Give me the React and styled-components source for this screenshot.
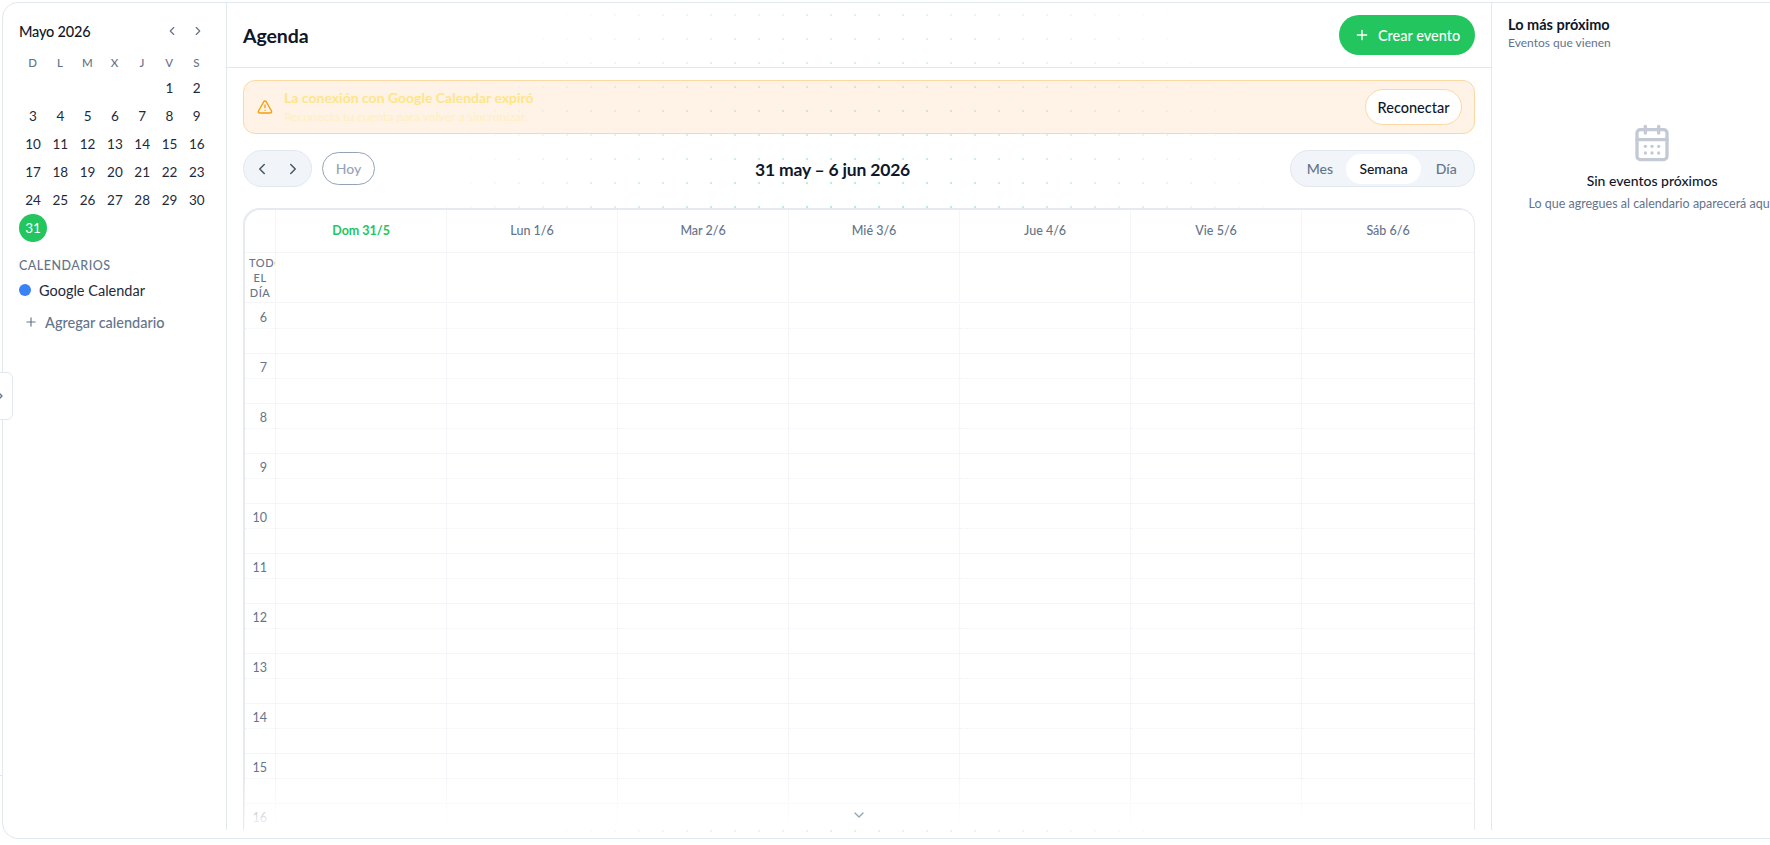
import React from "react";
import styled, { createGlobalStyle } from "styled-components";
import { ChevronLeft, ChevronRight, ChevronDown, Plus, TriangleAlert, CalendarDays } from "lucide-react";

const Global = createGlobalStyle`
  html, body { margin: 0; padding: 0; height: 100%; background: #fff; overflow: hidden; }
  body { font-family: "Lato", "Noto Sans", sans-serif; color: #0f172a; }
  * { box-sizing: border-box; }
  button { font-family: inherit; }
`;

const Page = styled.div`
  position: relative;
  width: 1770px;
  height: 845px;
  overflow: hidden;
  padding: 2px 0 0 2px;
`;

const Shell = styled.div`
  position: relative;
  width: 1840px;
  height: 837px;
  border: 1px solid #e2e8f0;
  border-radius: 16px;
  background: #fff;
  padding-bottom: 8px;
`;

const Dots = styled.div`
  position: absolute;
  inset: 0;
  border-radius: 16px;
  background-image: radial-gradient(circle at center, rgba(34, 197, 94, 0.38) 1px, transparent 1.4px);
  background-size: 24px 24px;
  -webkit-mask-image: radial-gradient(ellipse 470px 570px at 857px 417px, #000 25%, transparent 100%);
  mask-image: radial-gradient(ellipse 470px 570px at 857px 417px, #000 25%, transparent 100%);
`;

const Columns = styled.div`
  position: relative;
  display: flex;
  height: 100%;
`;

const Sidebar = styled.aside`
  flex: 0 0 224px;
  border-right: 1px solid #e2e8f0;
  padding: 17px 16px 0 16px;
`;

const MonthBar = styled.div`
  display: flex;
  align-items: center;
  justify-content: space-between;
  height: 22px;
  padding-right: 5px;
`;

const MonthName = styled.div`
  font-size: 14.5px;
  font-weight: 500;
  letter-spacing: -0.2px;
  color: #0f172a;
`;

const MonthNav = styled.div`
  display: flex;
  gap: 12px;
  color: #64748b;
`;

const MonthGrid = styled.div`
  display: grid;
  grid-template-columns: repeat(7, 27.3px);
  grid-template-rows: 23px;
  grid-auto-rows: 28px;
  margin-top: 9px;
`;

const Weekday = styled.div`
  display: flex;
  align-items: center;
  justify-content: center;
  padding-bottom: 1px;
  font-size: 11.5px;
  font-weight: 500;
  color: #64748b;
`;

const DayNum = styled.div`
  display: flex;
  align-items: center;
  justify-content: center;
  width: 28px;
  height: 28px;
  border-radius: 50%;
  font-size: 13.5px;
  color: ${(p) => (p.$today ? "#fff" : "#1e293b")};
  background: ${(p) => (p.$today ? "#22c55e" : "transparent")};
`;

const SectionLabel = styled.div`
  margin-top: 15px;
  font-size: 12.5px;
  font-weight: 500;
  letter-spacing: 0.5px;
  color: #64748b;
  line-height: 18px;
`;

const CalendarRow = styled.div`
  display: flex;
  align-items: center;
  gap: 8px;
  margin-top: 6px;
  height: 18px;
  font-size: 14.5px;
  color: #1e293b;
`;

const ColorDot = styled.span`
  width: 12px;
  height: 12px;
  border-radius: 50%;
  background: #3b82f6;
`;

const AddCalendar = styled.div`
  display: flex;
  align-items: center;
  gap: 7px;
  margin-top: 14px;
  padding-left: 5px;
  height: 18px;
  font-size: 14.5px;
  font-weight: 500;
  color: #64748b;
`;

const Main = styled.main`
  flex: 0 0 1265px;
  min-width: 0;
  display: flex;
  flex-direction: column;
  border-right: 1px solid #e2e8f0;
`;

const MainHeader = styled.header`
  flex: 0 0 65px;
  display: flex;
  align-items: center;
  justify-content: space-between;
  padding: 0 16px;
  border-bottom: 1px solid #e2e8f0;
`;

const PageTitle = styled.h1`
  margin: 0;
  font-size: 19.5px;
  font-weight: 700;
  letter-spacing: -0.1px;
  color: #0f172a;
`;

const CreateButton = styled.button`
  display: flex;
  align-items: center;
  justify-content: center;
  gap: 8px;
  width: 136px;
  height: 40px;
  border: 0;
  border-radius: 20px;
  background: #22c55e;
  color: #fff;
  font-size: 14.5px;
  font-weight: 500;
`;

const Body = styled.div`
  flex: 1;
  min-height: 0;
  display: flex;
  flex-direction: column;
  padding: 12px 16px 0;
`;

const Banner = styled.div`
  flex: 0 0 54px;
  display: flex;
  align-items: center;
  gap: 11px;
  padding: 0 12px 0 13px;
  border: 1px solid #fcd9a2;
  border-radius: 12px;
  background: rgba(245, 150, 30, 0.11);
`;

const BannerText = styled.div`
  flex: 1;
  display: flex;
  flex-direction: column;
  gap: 2px;
`;

const BannerTitle = styled.div`
  font-size: 14px;
  font-weight: 700;
  line-height: 18px;
  color: #fde68a;
`;

const BannerSub = styled.div`
  font-size: 12.2px;
  line-height: 16px;
  color: #fef0c0;
`;

const ReconnectButton = styled.button`
  width: 97px;
  height: 36px;
  border: 1px solid #fcd9a2;
  border-radius: 18px;
  background: #fff;
  color: #0f172a;
  font-size: 14.5px;
  font-weight: 500;
`;

const Toolbar = styled.div`
  flex: 0 0 37px;
  display: flex;
  align-items: center;
  justify-content: space-between;
  margin-top: 16px;
`;

const ToolGroup = styled.div`
  display: flex;
  align-items: center;
  gap: 10px;
`;

const NavPill = styled.div`
  display: flex;
  align-items: center;
  justify-content: center;
  gap: 13px;
  width: 69px;
  height: 37px;
  border: 1px solid #e2e8f0;
  border-radius: 19px;
  background: #f1f5f9;
  color: #475569;
`;

const TodayButton = styled.button`
  width: 53px;
  height: 33px;
  border: 1px solid #94a3b8;
  border-radius: 17px;
  background: transparent;
  color: #94a3b8;
  font-size: 14px;
  font-weight: 500;
`;

const RangeTitle = styled.div`
  padding-top: 2px;
  font-size: 17.5px;
  font-weight: 700;
  letter-spacing: -0.2px;
  color: #0f172a;
`;

const ViewSwitch = styled.div`
  display: flex;
  align-items: center;
  width: 185px;
  height: 37px;
  padding: 0 3px;
  border: 1px solid #e2e8f0;
  border-radius: 19px;
  background: #f1f5f9;
`;

const ViewOption = styled.div`
  display: flex;
  align-items: center;
  justify-content: center;
  width: ${(p) => p.$w}px;
  height: 30px;
  border-radius: 15px;
  font-size: 14px;
  font-weight: 500;
  color: ${(p) => (p.$active ? "#0f172a" : "#64748b")};
  background: ${(p) => (p.$active ? "#fff" : "transparent")};
`;

const Calendar = styled.div`
  position: relative;
  flex: 1;
  min-height: 0;
  margin-top: 21px;
  border: 1px solid #e6e9ee;
  border-bottom: 0;
  border-radius: 16px 16px 0 0;
  box-shadow: inset 1px 1px 0 #e6e9ee;
  background: #fff;
  overflow: hidden;
  padding: 1px 0 0 1px;
`;

const WeekRow = styled.div`
  display: grid;
  grid-template-columns: 30px repeat(6, 171px) 1fr;
  height: ${(p) => p.$h}px;
  border-bottom: 1px solid #f3f5f8;
`;

const HeadCell = styled.div`
  display: flex;
  align-items: center;
  justify-content: center;
  padding-bottom: 2px;
  border-left: ${(p) => (p.$first ? "0" : "1px solid #f3f5f8")};
  font-size: 12.5px;
  font-weight: ${(p) => (p.$today ? 700 : 500)};
  color: ${(p) => (p.$today ? "#22c55e" : "#64748b")};
`;

const AllDayLabel = styled.div`
  padding: 2px 4px 0;
  overflow: hidden;
  font-size: 11px;
  font-weight: 500;
  line-height: 15px;
  letter-spacing: 0.6px;
  text-align: center;
  text-transform: uppercase;
  color: #64748b;
`;

const Cell = styled.div`
  border-left: 1px solid #f3f5f8;
`;

const HourList = styled.div`
  margin-top: 1px;
`;

const HourRow = styled.div`
  display: grid;
  grid-template-columns: 30px repeat(6, 171px) 1fr;
  height: 50px;
  border-bottom: 1px solid #f3f5f8;
`;

const HourCell = styled.div`
  position: relative;
  border-left: ${(p) => (p.$gutter ? "0" : "1px solid #f3f5f8")};
  padding: 5px 8px 0 0;
  font-size: 12.5px;
  line-height: 18px;
  text-align: right;
  color: #64748b;
  &::after {
    content: "";
    position: absolute;
    left: 0;
    right: 0;
    top: 24px;
    border-top: 1px dotted #f0f2f5;
  }
`;

const BottomFade = styled.div`
  position: absolute;
  left: 0;
  right: 0;
  bottom: 0;
  height: 56px;
  display: flex;
  align-items: flex-end;
  justify-content: center;
  padding-bottom: 7px;
  background: linear-gradient(to bottom, rgba(255, 255, 255, 0), #fff 100%);
  color: #94a3b8;
`;

const Aside = styled.aside`
  flex: 0 0 320px;
  padding: 13px 16px 0;
`;

const AsideTitle = styled.div`
  font-size: 14.5px;
  font-weight: 700;
  line-height: 18px;
  color: #0f172a;
`;

const AsideSub = styled.div`
  font-size: 12px;
  line-height: 18px;
  color: #64748b;
`;

const Empty = styled.div`
  display: flex;
  flex-direction: column;
  align-items: center;
  margin-top: 71px;
  color: #c3cad6;
`;

const EmptyTitle = styled.div`
  margin-top: 8px;
  font-size: 14px;
  font-weight: 500;
  line-height: 20px;
  color: #0f172a;
`;

const EmptySub = styled.div`
  margin-top: 4px;
  font-size: 12.5px;
  line-height: 18px;
  color: #64748b;
  white-space: nowrap;
`;

const SideToggle = styled.div`
  position: absolute;
  left: -13px;
  top: 372px;
  width: 26px;
  height: 48px;
  display: flex;
  align-items: center;
  justify-content: center;
  border: 1px solid #e2e8f0;
  border-radius: 6px;
  background: #fff;
  color: #64748b;
`;

const EdgeTick = styled.div`
  position: absolute;
  left: 0;
  top: 775px;
  width: 2px;
  height: 1px;
  background: #e2e8f0;
`;

const weekdays = ["D", "L", "M", "X", "J", "V", "S"];
const days = [...Array(5).fill(null), ...Array.from({ length: 31 }, (_, i) => i + 1)];
const weekHeads = ["Dom 31/5", "Lun 1/6", "Mar 2/6", "Mié 3/6", "Jue 4/6", "Vie 5/6", "Sáb 6/6"];
const hours = [6, 7, 8, 9, 10, 11, 12, 13, 14, 15, 16];

export default function App() {
  return (
    <Page>
      <Global />
      <EdgeTick />
      <Shell>
        <Dots />
        <Columns>
          <Sidebar>
            <MonthBar>
              <MonthName>Mayo 2026</MonthName>
              <MonthNav>
                <ChevronLeft size={14} />
                <ChevronRight size={14} />
              </MonthNav>
            </MonthBar>
            <MonthGrid>
              {weekdays.map((d, i) => (
                <Weekday key={i}>{d}</Weekday>
              ))}
              {days.map((d, i) => (
                <DayNum key={i} $today={d === 31}>
                  {d}
                </DayNum>
              ))}
            </MonthGrid>
            <SectionLabel>CALENDARIOS</SectionLabel>
            <CalendarRow>
              <ColorDot />
              Google Calendar
            </CalendarRow>
            <AddCalendar>
              <Plus size={14} />
              Agregar calendario
            </AddCalendar>
          </Sidebar>

          <Main>
            <MainHeader>
              <PageTitle>Agenda</PageTitle>
              <CreateButton>
                <Plus size={16} />
                Crear evento
              </CreateButton>
            </MainHeader>
            <Body>
              <Banner>
                <TriangleAlert size={16} color="#f59e0b" />
                <BannerText>
                  <BannerTitle>La conexión con Google Calendar expiró</BannerTitle>
                  <BannerSub>Reconecta tu cuenta para volver a sincronizar.</BannerSub>
                </BannerText>
                <ReconnectButton>Reconectar</ReconnectButton>
              </Banner>
              <Toolbar>
                <ToolGroup>
                  <NavPill>
                    <ChevronLeft size={18} />
                    <ChevronRight size={18} />
                  </NavPill>
                  <TodayButton>Hoy</TodayButton>
                </ToolGroup>
                <RangeTitle>31 may – 6 jun 2026</RangeTitle>
                <ViewSwitch>
                  <ViewOption $w={52}>Mes</ViewOption>
                  <ViewOption $w={76} $active>
                    Semana
                  </ViewOption>
                  <ViewOption $w={50}>Día</ViewOption>
                </ViewSwitch>
              </Toolbar>
              <Calendar>
                <WeekRow $h={43}>
                  <HeadCell $first />
                  {weekHeads.map((h, i) => (
                    <HeadCell key={h} $today={i === 0}>
                      {h}
                    </HeadCell>
                  ))}
                </WeekRow>
                <WeekRow $h={50}>
                  <AllDayLabel>Todo el día</AllDayLabel>
                  {weekHeads.map((h) => (
                    <Cell key={h} />
                  ))}
                </WeekRow>
                <HourList>
                  {hours.map((h) => (
                    <HourRow key={h}>
                      <HourCell $gutter>{h}</HourCell>
                      {weekHeads.map((d) => (
                        <HourCell key={d} />
                      ))}
                    </HourRow>
                  ))}
                </HourList>
                <BottomFade>
                  <ChevronDown size={16} />
                </BottomFade>
              </Calendar>
            </Body>
          </Main>

          <Aside>
            <AsideTitle>Lo más próximo</AsideTitle>
            <AsideSub>Eventos que vienen</AsideSub>
            <Empty>
              <CalendarDays size={40} />
              <EmptyTitle>Sin eventos próximos</EmptyTitle>
              <EmptySub>Lo que agregues al calendario aparecerá aquí.</EmptySub>
            </Empty>
          </Aside>
        </Columns>
      </Shell>
      <SideToggle>
        <ChevronRight size={16} />
      </SideToggle>
    </Page>
  );
}
